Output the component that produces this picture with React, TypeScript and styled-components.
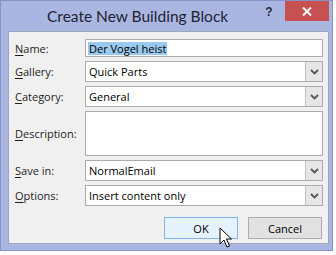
import styled, { createGlobalStyle } from "styled-components";

const GlobalStyle = createGlobalStyle`
  body {
    margin: 0;
    background: #ffffff;
    font-family: "Open Sans", "Liberation Sans", sans-serif;
  }
`;

const Window = styled.div`
  position: relative;
  box-sizing: border-box;
  width: 333px;
  height: 251px;
  border: 1px solid #8592c6;
  background: #aab6e2;
  display: flex;
  flex-direction: column;
`;

const TitleBar = styled.div`
  height: 30px;
  display: flex;
  align-items: flex-start;
`;

const Title = styled.div`
  flex: 1;
  padding: 6px 0 0 46px;
  font-family: Lato, "Open Sans", sans-serif;
  font-size: 15.5px;
  color: #1f2330;
  white-space: nowrap;
`;

const HelpButton = styled.div`
  width: 14px;
  margin-top: 4px;
  font-family: "Liberation Sans", sans-serif;
  font-size: 12px;
  font-weight: bold;
  color: #2a2d38;
  text-align: center;
`;

const CloseButton = styled.div`
  width: 44px;
  height: 20px;
  margin: 0 3px 0 9px;
  background: #c75050;
  display: flex;
  align-items: center;
  justify-content: center;
`;

const Client = styled.div`
  flex: 1;
  margin: 0 3px 6px 7px;
  border: 1px solid #9ea5bd;
  background: #f0f0f0;
  padding: 7px 5px 0 6px;
  display: flex;
  flex-direction: column;
`;

const Form = styled.div`
  display: grid;
  grid-template-columns: 70px 1fr;
  row-gap: 4px;
`;

const Label = styled.div`
  display: flex;
  align-items: center;
  font-size: 11px;
  color: #1e1e1e;

  u {
    text-decoration-thickness: 1px;
    text-underline-offset: 2px;
  }
`;

const Field = styled.div<{ $h: number }>`
  box-sizing: border-box;
  height: ${(p) => p.$h}px;
  border: 1px solid #acacac;
  background: #ffffff;
  display: flex;
  align-items: center;
  font-size: 11px;
  color: #000000;
`;

const FieldText = styled.span`
  flex: 1;
  padding-left: 3px;
  white-space: nowrap;
`;

const Selected = styled.span`
  margin-left: 2px;
  padding: 0 1px;
  line-height: 13px;
  background: #99c9ef;
  white-space: nowrap;
`;

const DropButton = styled.div`
  box-sizing: border-box;
  width: 17px;
  height: 100%;
  background: #e6e6e6;
  border-left: 1px solid #c2c2c2;
  display: flex;
  align-items: center;
  justify-content: center;
`;

const Buttons = styled.div`
  display: flex;
  justify-content: flex-end;
  gap: 10px;
  margin: 11px 1px 0 0;
`;

const Button = styled.div<{ $primary?: boolean }>`
  box-sizing: border-box;
  width: 74px;
  height: 22px;
  border: 1px solid ${(p) => (p.$primary ? "#7eb4ea" : "#adadad")};
  background: ${(p) => (p.$primary ? "#e5f1fb" : "#e1e1e1")};
  display: flex;
  align-items: center;
  justify-content: center;
  font-size: 11px;
  color: #000000;
`;

const Cursor = styled.svg`
  position: absolute;
  left: 218px;
  top: 226px;
`;

const Chevron = () => (
  <svg width="9" height="6" viewBox="0 0 9 6">
    <polyline points="1,1 4.5,4.5 8,1" fill="none" stroke="#555" strokeWidth="1.8" />
  </svg>
);

const Select = ({ value }: { value: string }) => (
  <Field $h={21}>
    <FieldText>{value}</FieldText>
    <DropButton>
      <Chevron />
    </DropButton>
  </Field>
);

export default function App() {
  return (
    <>
      <GlobalStyle />
      <Window>
        <TitleBar>
          <Title>Create New Building Block</Title>
          <HelpButton>?</HelpButton>
          <CloseButton>
            <svg width="10" height="9" viewBox="0 0 10 9">
              <path d="M1 0.5 L9 8.5 M9 0.5 L1 8.5" stroke="#fff" strokeWidth="2" />
            </svg>
          </CloseButton>
        </TitleBar>
        <Client>
          <Form>
            <Label>
              <span><u>N</u>ame:</span>
            </Label>
            <Field $h={18}>
              <Selected>Der Vogel heist</Selected>
            </Field>

            <Label>
              <span><u>G</u>allery:</span>
            </Label>
            <Select value="Quick Parts" />

            <Label>
              <span><u>C</u>ategory:</span>
            </Label>
            <Select value="General" />

            <Label>
              <span><u>D</u>escription:</span>
            </Label>
            <Field $h={45} />

            <Label>
              <span><u>S</u>ave in:</span>
            </Label>
            <Select value="NormalEmail" />

            <Label>
              <span><u>O</u>ptions:</span>
            </Label>
            <Select value="Insert content only" />
          </Form>
          <Buttons>
            <Button $primary>OK</Button>
            <Button>Cancel</Button>
          </Buttons>
        </Client>
        <Cursor width="14" height="22" viewBox="0 0 14 22">
          <path
            d="M1 1 L1 17 L5 13 L8 20 L10.5 19 L7.5 12 L12.5 12 Z"
            fill="#fff"
            stroke="#000"
            strokeWidth="1"
            strokeLinejoin="miter"
          />
        </Cursor>
      </Window>
    </>
  );
}
